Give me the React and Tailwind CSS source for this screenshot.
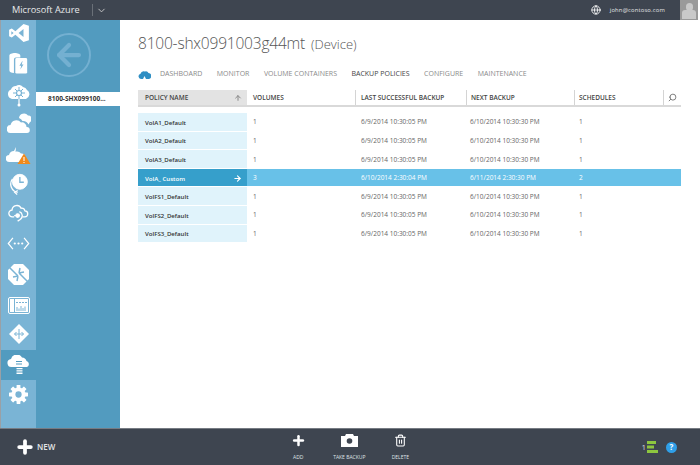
import React from "react";
import { ArrowLeft, ArrowRight, ArrowUp, ChevronDown, Globe, Search, Plus, Trash2 } from "lucide-react";

const font = { fontFamily: '"Open Sans", sans-serif' };

const tabs = ["DASHBOARD", "MONITOR", "VOLUME CONTAINERS", "BACKUP POLICIES", "CONFIGURE", "MAINTENANCE"];

const rows = [
  { name: "VolA1_Default", volumes: "1", last: "6/9/2014 10:30:05 PM", next: "6/10/2014 10:30:30 PM", schedules: "1" },
  { name: "VolA2_Default", volumes: "1", last: "6/9/2014 10:30:05 PM", next: "6/10/2014 10:30:30 PM", schedules: "1" },
  { name: "VolA3_Default", volumes: "1", last: "6/9/2014 10:30:05 PM", next: "6/10/2014 10:30:30 PM", schedules: "1" },
  { name: "VolA_ Custom", volumes: "3", last: "6/10/2014 2:30:04 PM", next: "6/11/2014 2:30:30 PM", schedules: "2", selected: true },
  { name: "VolFS1_Default", volumes: "1", last: "6/9/2014 10:30:05 PM", next: "6/10/2014 10:30:30 PM", schedules: "1" },
  { name: "VolFS2_Default", volumes: "1", last: "6/9/2014 10:30:05 PM", next: "6/10/2014 10:30:30 PM", schedules: "1" },
  { name: "VolFS3_Default", volumes: "1", last: "6/9/2014 10:30:05 PM", next: "6/10/2014 10:30:30 PM", schedules: "1" },
];

const gridCols = "grid grid-cols-[109px_108px_111px_108px_89px_18px]";

const VsIcon = () => (
  <svg width="20" height="18" viewBox="0 0 22 20" fill="white">
    <path d="M16 0l6 2v16l-6 2-9-8-4 3-3-1.500V6.500L3 5l4 3 9-8zM16 5.500L10.500 10l5.500 4.500v-9zM2.500 8v4L5 10 2.500 8z" />
  </svg>
);

const StorageIcon = () => (
  <svg width="19" height="21" viewBox="0 0 20 23" fill="white">
    <path d="M0 3c0-2 3-3 6-3s6 1 6 3v2H7a2 2 0 0 0-2 2v15c-3 0-5-1-5-3V3z" />
    <rect x="6.500" y="5.500" width="13" height="17" rx="1.500" />
    <path d="M14 9l-3 5h2l-1 4 3.500-5.500h-2l1-3.500z" fill="#7ab4d5" />
  </svg>
);

const HubCloudIcon = () => (
  <svg width="24" height="23" viewBox="0 0 24 23">
    <path d="M5 15a5 5 0 0 1-1-9.500A5 5 0 0 1 9 2a5 5 0 0 1 7 1 5 5 0 0 1 4 3 5 5 0 0 1-1 9H5z" fill="white" />
    <circle cx="12" cy="9" r="2.500" fill="none" stroke="#7ab4d5" strokeWidth="1.200" />
    <path d="M12 3v3.500M12 11.500V15M6 9h3.500M14.500 9H18M8 5l2.200 2.200M16 5l-2.200 2.200M8 13l2.200-2.200M16 13l-2.200-2.200" stroke="#7ab4d5" strokeWidth="1" />
    <path d="M12 15v5" stroke="white" strokeWidth="1.200" />
    <circle cx="12" cy="21" r="1.500" fill="white" />
  </svg>
);

const CloudsIcon = () => (
  <svg width="24" height="20" viewBox="0 0 24 20" fill="white">
    <path d="M4 20a4 4 0 0 1-.5-8A6 6 0 0 1 14 9.500a4.500 4.500 0 0 1 5.500 4.500A3 3 0 0 1 20 20H4z" />
    <path d="M12 5a5 5 0 0 1 9-2.500A3.500 3.500 0 0 1 23 9l-1.500 2.500A6 6 0 0 0 15.500 8 6 6 0 0 0 12 5z" />
  </svg>
);

const AlertCloudIcon = () => (
  <svg width="25" height="17" viewBox="0 0 25 17">
    <path d="M3.500 15a3.500 3.500 0 0 1-.5-7 5.500 5.500 0 0 1 5-4l2-4-.5 5.500H13L9.500 11l.5-3.500H7.500L10 4.500a5 5 0 0 1 5 2 4 4 0 0 1 4 1.500l-5 7H3.500z" fill="white" />
    <path d="M18 6.500l6.500 10.500h-13z" fill="#f08a1c" />
    <path d="M17.500 10h1v4h-1zM17.500 15h1v1h-1z" fill="white" />
  </svg>
);

const ClockIcon = () => (
  <svg width="18" height="22" viewBox="0 0 20 25" fill="none" stroke="white">
    <circle cx="11" cy="10" r="8.500" fill="white" />
    <path d="M11 4.500V10.500h4.500" stroke="#7ab4d5" strokeWidth="1.500" />
    <path d="M2.500 7a9.500 9.500 0 0 0 6 15" strokeWidth="1.500" />
    <path d="M8 24.500l-3-2.500 3.500-2" strokeWidth="1.300" />
  </svg>
);

const SyncCloudIcon = () => (
  <svg width="23" height="18" viewBox="0 0 24 21" fill="none" stroke="white" strokeWidth="1.500">
    <path d="M7 15H5a4 4 0 0 1-.5-8A5.500 5.500 0 0 1 15 5a4 4 0 0 1 4.500 3A3.500 3.500 0 0 1 19 15h-2" />
    <circle cx="11" cy="13.500" r="2" fill="white" />
    <path d="M7 13.500h2M13 9a5 5 0 0 1 1 9l-3 2" />
  </svg>
);

const CodeDotsIcon = () => (
  <svg width="23" height="13" viewBox="0 0 24 14" fill="none" stroke="white" strokeWidth="1.300">
    <path d="M6 1L1 7l5 6M18 1l5 6-5 6" />
    <circle cx="8" cy="7" r="1.200" fill="white" stroke="none" />
    <circle cx="12" cy="7" r="1.200" fill="white" stroke="none" />
    <circle cx="16" cy="7" r="1.200" fill="white" stroke="none" />
  </svg>
);

const TrafficIcon = () => (
  <svg width="21" height="21" viewBox="0 0 21 21">
    <path d="M6 0h9l6 6v9l-6 6H6l-6-6V6z" fill="white" />
    <path d="M1 3l9 9M10 12l-1 5M10 12l-5 1M20 18l-9-9M11 9l1-5M11 9l5-1" stroke="#7ab4d5" strokeWidth="1.500" fill="none" />
  </svg>
);

const DashboardIcon = () => (
  <svg width="22" height="17" viewBox="0 0 22 17">
    <rect x="0.500" y="0.500" width="21" height="16" rx="1.500" fill="none" stroke="white" />
    <rect x="2" y="2" width="18" height="13" fill="white" />
    <path d="M6.500 2v13" stroke="#7ab4d5" />
    <path d="M8 5.500h11" stroke="#7ab4d5" strokeDasharray="2 1" />
    <path d="M9 14v-4M11 14v-2.500M13 14V9M15 14v-3M17 14V9.500" stroke="#7ab4d5" strokeWidth="1" />
  </svg>
);

const DiamondIcon = () => (
  <svg width="20" height="20" viewBox="0 0 20 20">
    <path d="M10 0l10 10-10 10L0 10z" fill="white" />
    <path d="M10 5v10M5.500 10h9M7.500 8L5.500 10l2 2M12.500 8l2 2-2 2" fill="none" stroke="#7ab4d5" />
  </svg>
);

const BackupCloudIcon = () => (
  <svg width="24" height="21" viewBox="0 0 24 21" fill="white">
    <path d="M5 12a4 4 0 0 1-1-8 6 6 0 0 1 11-1.500A5 5 0 0 1 19.500 6 3.200 3.200 0 0 1 20 12H5z" />
    <path d="M9 6h6v1H9zM9 8.500h6v1H9z" fill="#529bbf" />
    <path d="M9.500 13h6v1.300h-6zM9.500 15.300h6v1.300h-6zM9.500 17.600h6v1.300h-6z" />
  </svg>
);

const GearIcon = () => (
  <svg width="19" height="19" viewBox="0 0 20 20">
    <g fill="white">
      <circle cx="10" cy="10" r="7.500" />
      {[0, 45, 90, 135, 180, 225, 270, 315].map((a) => (
        <rect key={a} x="8" y="0" width="4" height="4" rx="0.500" transform={`rotate(${a} 10 10)`} />
      ))}
    </g>
    <circle cx="10" cy="10" r="3.300" fill="#7ab4d5" />
  </svg>
);

// heights keep the icons centred where the reference has them, the rail is not quite regular
const sideItems = [
  { icon: <VsIcon />, h: "h-[26px]" },
  { icon: <StorageIcon />, h: "h-[34px]" },
  { icon: <HubCloudIcon />, h: "h-[30px]" },
  { icon: <CloudsIcon />, h: "h-[26px]" },
  { icon: <AlertCloudIcon />, h: "h-[38px]" },
  { icon: <ClockIcon />, h: "h-[20px]" },
  { icon: <SyncCloudIcon />, h: "h-[38px]" },
  { icon: <CodeDotsIcon />, h: "h-[22px]" },
  { icon: <TrafficIcon />, h: "h-[40px]" },
  { icon: <DashboardIcon />, h: "h-[22px]" },
  { icon: <DiamondIcon />, h: "h-[34px] pt-[2px]" },
  { icon: <BackupCloudIcon />, h: "h-[30px]", active: true },
  { icon: <GearIcon />, h: "h-[28px]" },
];

function Sidebar() {
  return (
    <div className="w-[35px] shrink-0 bg-[#7ab4d5] flex flex-col">
      {sideItems.map((item, i) => (
        <div key={i} className={`${item.h} flex items-center justify-center shrink-0 ${item.active ? "bg-[#529bbf]" : ""}`}>
          {item.icon}
        </div>
      ))}
    </div>
  );
}

function Table() {
  return (
    <div className="w-[543px] mt-[10px]">
      <div className={`${gridCols} h-[15px] border-b-2 border-[#d9d9d9] box-content text-[6.500px] font-semibold text-[#444]`}>
        <div className="bg-[#e3e3e3] flex items-center justify-between pl-[7px] pr-[5px]">
          POLICY NAME
          <ArrowUp size={8} strokeWidth={3} className="text-[#888]" />
        </div>
        <div className="flex items-center pl-[6px]">VOLUMES</div>
        <div className="flex items-center pl-[5px] border-l border-[#d4d4d4]">LAST SUCCESSFUL BACKUP</div>
        <div className="flex items-center pl-[4px] border-l border-[#d4d4d4]">NEXT BACKUP</div>
        <div className="flex items-center pl-[4px] border-l border-[#d4d4d4]">SCHEDULES</div>
        <div className="flex items-center justify-center border-l border-[#d4d4d4]">
          <Search size={9} strokeWidth={2.500} className="text-[#777] -scale-x-100" />
        </div>
      </div>
      <div className="mt-[6px] flex flex-col">
        {rows.map((r) => (
          <div key={r.name} className={`${gridCols} h-[18.600px] text-[6.500px] items-stretch border-b border-white ${r.selected ? "bg-[#68c1e8] text-white" : "text-[#666]"}`}>
            <div className={`flex items-center justify-between pl-[7px] pr-[5px] pt-px text-[6.100px] font-semibold ${r.selected ? "bg-[#369fcb] text-white" : "bg-[#e0f3fb] text-[#333]"}`}>
              {r.name}
              {r.selected && <ArrowRight size={9} strokeWidth={3} />}
            </div>
            <div className="flex items-center pl-[6px] pt-px">{r.volumes}</div>
            <div className="flex items-center pl-[6px] pt-px">{r.last}</div>
            <div className="flex items-center pl-[4px] pt-px">{r.next}</div>
            <div className="flex items-center pl-[5px] pt-px">{r.schedules}</div>
            <div />
          </div>
        ))}
      </div>
    </div>
  );
}

function BarAction({ icon, label }) {
  return (
    <div className="flex flex-col items-center text-white w-[36px]">
      <div className="h-[16px] flex items-center">{icon}</div>
      <span className="text-[5px] mt-[5px] whitespace-nowrap text-[#dfe1e4]">{label}</span>
    </div>
  );
}

export default function App() {
  return (
    <div style={font} className="w-[700px] h-[465px] flex flex-col overflow-hidden bg-white opacity-[0.999]">
      <div className="h-[20px] shrink-0 bg-[#3e4550] flex items-center text-white">
        <span className="ml-[12px] text-[9.200px] text-[#e8e9eb]">Microsoft Azure</span>
        <div className="ml-[12px] h-[12px] border-l border-[#6a7078]" />
        <ChevronDown size={11} className="ml-[3px] text-[#ccc]" />
        <div className="ml-auto flex items-center h-full">
          <Globe size={10} className="text-white" />
          <span className="ml-[9px] text-[5.800px] text-[#e4e5e7] tracking-[0.2px]">john@contoso.com</span>
          <div className="ml-[15px] w-[18px] h-full bg-[#9a9a9a] relative overflow-hidden">
            <div className="w-[7px] h-[8px] rounded-full bg-[#c9c9c9] mx-auto mt-[3px]" />
            <div className="w-[14px] h-[9px] rounded-t-[3px] bg-[#c9c9c9] mx-auto mt-[-1px]" />
          </div>
          <div className="w-[2px] h-full bg-white" />
        </div>
      </div>

      <div className="flex-1 flex min-h-0">
        <div className="w-[1px] bg-[#9aa0a6] shrink-0" />
        <Sidebar />
        <div className="w-[84px] shrink-0 bg-[#529bbf] flex flex-col">
          <div className="w-[44px] h-[44px] rounded-full border-2 border-[#74b0d1] ml-[11px] mt-[13px] flex items-center justify-center">
            <ArrowLeft size={34} strokeWidth={3} className="text-[#74b0d1]" />
          </div>
          <div className="mt-[15px] h-[14px] bg-white flex items-center pl-[12px] text-[6.500px] font-bold text-[#333]">
            8100-SHX099100...
          </div>
        </div>
        <div className="flex-1 pl-[18px] flex flex-col">
          <div className="mt-[12px] h-[24px] flex items-baseline text-[#555]">
            <span className="text-[15.500px] font-light tracking-[-0.200px]">8100-shx0991003g44mt</span>
            <span className="text-[13px] font-light ml-[6px]">(Device)</span>
          </div>
          <div className="mt-[12px] h-[12px] flex items-center text-[7px] text-[#8a8a8a]">
            <svg width="13" height="9" viewBox="0 0 13 9" fill="#2f8fc4">
              <path d="M3 9a2.700 2.700 0 0 1-.5-5.300A3.500 3.500 0 0 1 7 1.500 3 3 0 0 1 10.500 3 3 3 0 0 1 10 9H8L6.500 6 5 9H3z" />
            </svg>
            <div className="ml-[9px] flex gap-[14.500px]">
              {tabs.map((t) => (
                <span key={t} className={t === "BACKUP POLICIES" ? "text-[#444]" : ""}>{t}</span>
              ))}
            </div>
          </div>
          <Table />
        </div>
      </div>

      <div className="h-[37px] shrink-0 bg-[#3e4550] border-t border-[#767b83] flex items-center relative text-white">
        <Plus size={20} strokeWidth={4.500} className="ml-[15px]" />
        <span className="ml-[2px] text-[8px] font-semibold text-[#e4e5e7]">NEW</span>
        <div className="ml-[225px] flex items-start">
          <BarAction icon={<Plus size={15} strokeWidth={4} />} label="ADD" />
          <div className="w-[15px]" />
          <BarAction
            icon={
              <svg width="17" height="13" viewBox="0 0 17 13">
                <path d="M0 2h4l1-2h7l1 2h4v11H0z" fill="white" />
                <circle cx="8.500" cy="7" r="2.800" fill="#3e4550" />
              </svg>
            }
            label="TAKE BACKUP"
          />
          <div className="w-[15px]" />
          <BarAction icon={<Trash2 size={13} strokeWidth={2} />} label="DELETE" />
        </div>
        <div className="ml-auto mr-[23px] flex items-center">
          <span className="text-[8px] text-[#d9d9d9]">1</span>
          <svg width="11" height="12" viewBox="0 0 11 12" fill="#8dc63f" className="ml-[1px]">
            <path d="M0 0h9v3H0zM0 4.500h7v3H0zM0 9h11v3H0z" />
          </svg>
          <div className="ml-[8px] w-[11px] h-[11px] rounded-full bg-[#2f9fe8] flex items-center justify-center text-[8px] font-bold text-white">?</div>
        </div>
      </div>
    </div>
  );
}
